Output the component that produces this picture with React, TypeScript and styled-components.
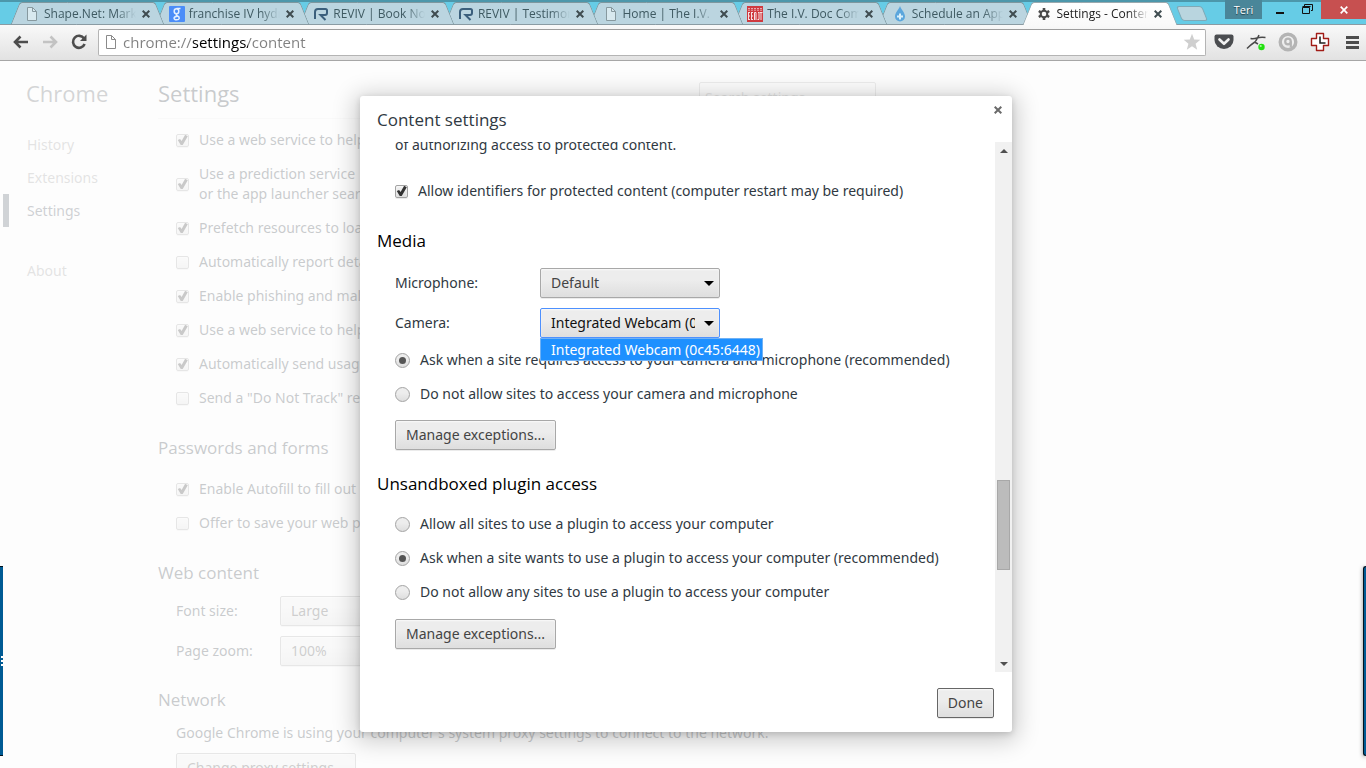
import React from 'react';
import styled, { createGlobalStyle, css } from 'styled-components';

const GlobalStyle = createGlobalStyle`
  *, *::before, *::after { box-sizing: border-box; }
  html, body { margin: 0; height: 100%; }
  body {
    font-family: 'Noto Sans', 'Open Sans', sans-serif;
    font-size: 14px;
    line-height: 20px;
    color: #303942;
    background: #fff;
    overflow: hidden;
  }
  #root { height: 100%; }
  button, input, select { font: inherit; color: inherit; margin: 0; }
  h1, h2, p, ul { margin: 0; padding: 0; font-weight: 400; }
`;

const Window = styled.div`
  display: flex;
  flex-direction: column;
  height: 100vh;
  overflow: hidden;
  position: relative;
`;

/* ---------- Tab strip ---------- */

const TitleBar = styled.header`
  display: flex;
  align-items: stretch;
  height: 25px;
  padding-left: 10px;
  font-family: 'Open Sans', sans-serif;
  background: #66cce6;
  box-shadow: inset 0 2px 0 #4c97ab, inset 0 -1px 0 #8a9ba3;
`;

const TabList = styled.nav`
  display: flex;
  flex: 1;
  min-width: 0;
  padding-top: 2px;
`;

const Tab = styled.div<{ $active?: boolean; $order: number }>`
  position: relative;
  z-index: ${(p) => (p.$active ? 20 : p.$order)};
  display: flex;
  align-items: center;
  gap: 4px;
  flex: 1 1 0;
  min-width: 0;
  padding: 0 14px;
  font-size: 12px;
  line-height: 16px;
  color: ${(p) => (p.$active ? '#222' : '#3f5a62')};

  & + & { margin-left: -11px; }

  &::before, &::after {
    content: '';
    position: absolute;
    z-index: -1;
    top: 0;
    bottom: 0;
    border: 1px solid ${(p) => (p.$active ? '#9aa9ae' : '#7d979f')};
    border-bottom: ${(p) => (p.$active ? 'none' : '1px solid #8a9ba3')};
    background: ${(p) => (p.$active ? 'linear-gradient(#fff, #f9f9f9)' : '#bbd5e0')};
  }
  &::before {
    left: 5px;
    right: 50%;
    border-right: none;
    border-top-left-radius: 3px;
    transform: skewX(-22deg);
  }
  &::after {
    left: 40%;
    right: 5px;
    border-left: none;
    border-top-right-radius: 3px;
    transform: skewX(22deg);
  }
`;

const TabTitle = styled.a`
  flex: 1;
  min-width: 0;
  overflow: hidden;
  white-space: nowrap;
  color: inherit;
  text-decoration: none;
  mask-image: linear-gradient(to right, #000 calc(100% - 20px), transparent);
`;

const IconButton = styled.button<{ $size: number }>`
  display: flex;
  align-items: center;
  justify-content: center;
  flex: none;
  width: ${(p) => p.$size}px;
  height: ${(p) => p.$size}px;
  padding: 0;
  border: none;
  background: none;
`;

const NewTab = styled.button`
  flex: none;
  width: 26px;
  height: 15px;
  margin: 6px 20px 0 1px;
  padding: 0;
  border: 1px solid #7fa9b6;
  border-radius: 3px;
  background: #b9d5df;
  transform: skewX(22deg);
`;

const UserBadge = styled.button`
  flex: none;
  width: 37px;
  height: 19px;
  padding: 0;
  border: none;
  background: #4a8699;
  color: #fff;
  font-size: 11px;
  line-height: 18px;
  text-shadow: 0 1px 1px rgba(0, 0, 0, 0.6);
`;

const WindowButton = styled.button<{ $close?: boolean }>`
  display: flex;
  align-items: center;
  justify-content: center;
  flex: none;
  width: ${(p) => (p.$close ? 45 : 26)}px;
  height: 19px;
  padding: 0;
  border: none;
  background: ${(p) => (p.$close ? '#c75050' : 'none')};
`;

const WindowButtons = styled.div`
  display: flex;
  padding-left: 5px;
  gap: 1px;
`;

/* ---------- Toolbar ---------- */

const Toolbar = styled.div`
  display: flex;
  align-items: center;
  height: 36px;
  padding: 0 4px 1px 11px;
  background: linear-gradient(#f9f9f9, #e2e2e2);
  border-bottom: 1px solid #a6a6a6;
`;

const NavButtons = styled.div`
  display: flex;
  gap: 9px;
  padding-right: 9px;
`;

const Omnibox = styled.div`
  display: flex;
  align-items: center;
  flex: 1;
  min-width: 0;
  height: 27px;
  padding: 0 4px 0 4px;
  gap: 4px;
  border: 1px solid #b4b4b4;
  border-top-color: #9d9d9d;
  border-radius: 2px;
  background: #fff;
`;

const UrlInput = styled.input`
  flex: 1;
  min-width: 0;
  padding: 0;
  border: none;
  outline: none;
  font-family: 'Open Sans', sans-serif;
  font-size: 15px;
  line-height: 20px;
  color: transparent;
  background: linear-gradient(to right, #808080 70px, #000 70px, #000 125px, #808080 125px);
  background-clip: text;
`;

const Extensions = styled.div`
  display: flex;
  gap: 12px;
  padding-left: 8px;
`;

/* ---------- Form controls ---------- */

const CheckInput = styled.input.attrs({ type: 'checkbox' })`
  appearance: none;
  flex: none;
  position: relative;
  width: 13px;
  height: 13px;
  border: 1px solid #a3a3a3;
  border-radius: 2px;
  background: linear-gradient(#ededed, #ededed 38%, #dedede);
  box-shadow: 0 1px 0 rgba(0, 0, 0, 0.08), inset 0 1px 2px rgba(255, 255, 255, 0.75);

  &:checked::after {
    content: '';
    position: absolute;
    inset: 0;
    background: #333;
    clip-path: polygon(7% 50%, 28% 42%, 42% 58%, 74% 3%, 98% 16%, 52% 96%, 34% 96%);
  }
`;

const RadioInput = styled.input.attrs({ type: 'radio' })`
  appearance: none;
  flex: none;
  display: grid;
  place-items: center;
  width: 15px;
  height: 15px;
  border: 1px solid #a3a3a3;
  border-radius: 50%;
  background: linear-gradient(#ededed, #ededed 38%, #dedede);

  &:checked::after {
    content: '';
    width: 7px;
    height: 7px;
    border-radius: 50%;
    background: #555;
  }
`;

const OptionLabel = styled.label<{ $gap: number }>`
  display: flex;
  align-items: center;
  gap: ${(p) => p.$gap}px;
  white-space: nowrap;
`;

const raised = css`
  border: 1px solid #a8a8a8;
  border-radius: 2px;
  background: linear-gradient(#ededed, #ededed 38%, #dedede);
  box-shadow: 0 1px 0 rgba(0, 0, 0, 0.08), inset 0 1px 2px rgba(255, 255, 255, 0.75);
`;

const Button = styled.button<{ $focused?: boolean }>`
  ${raised}
  align-self: flex-start;
  flex: none;
  height: 30px;
  padding: 0 10px;
  white-space: nowrap;
  color: #444;
  ${(p) => p.$focused && css`border-color: #666;`}
`;

const SelectBox = styled.div<{ $width: number }>`
  position: relative;
  flex: none;
  width: ${(p) => p.$width}px;

  &::after {
    content: '';
    position: absolute;
    top: 13px;
    right: 6px;
    border: 5px solid transparent;
    border-top-color: #000;
    border-bottom: none;
    pointer-events: none;
  }
`;

const Select = styled.select<{ $open?: boolean }>`
  ${raised}
  appearance: none;
  display: block;
  width: 100%;
  height: 30px;
  padding: 0 24px 0 10px;
  color: #444;
  outline: none;
  ${(p) => p.$open && css`border-color: #4d90fe; color: #111;`}
`;

const Popup = styled.ul`
  position: absolute;
  z-index: 2;
  top: 30px;
  left: 0;
  list-style: none;
  white-space: nowrap;
  border: 1px solid #6fb1f5;
  background: #1e90ff;
  color: #fff;
`;

const PopupItem = styled.li`
  padding: 1px 2px 0 10px;
`;

/* ---------- Settings page behind the dialog ---------- */

const Viewport = styled.div`
  position: relative;
  flex: 1;
  min-height: 0;
  overflow: hidden;
`;

const Page = styled.div`
  display: flex;
  height: 100%;
  padding-left: 3px;
  overflow: hidden;
`;

const Sidebar = styled.nav`
  flex: none;
  width: 155px;
  padding-top: 17px;
`;

const PageTitle = styled.h1<{ $dim?: boolean }>`
  font-family: 'Open Sans', sans-serif;
  font-size: 22px;
  line-height: 30px;
  color: ${(p) => (p.$dim ? '#5c6166' : '#303942')};
`;

const SidebarTitle = styled(PageTitle)`
  padding: 0 0 20px 23px;
`;

const SideLink = styled.a<{ $current?: boolean; $apart?: boolean }>`
  display: block;
  height: 33px;
  margin-top: ${(p) => (p.$apart ? 27 : 0)}px;
  padding-left: ${(p) => (p.$current ? 18 : 24)}px;
  border-left: ${(p) => (p.$current ? '6px solid #4e5764' : 'none')};
  line-height: 33px;
  text-decoration: none;
  color: ${(p) => (p.$current ? '#464e5a' : '#999')};
`;

const Main = styled.main`
  flex: 0 1 718px;
  min-width: 0;
`;

const MainHeader = styled.div`
  display: flex;
  justify-content: space-between;
  height: 58px;
  padding-top: 17px;
  border-bottom: 1px solid #eee;
`;

const SearchInput = styled.input`
  width: 177px;
  height: 30px;
  margin-top: 4px;
  padding: 0 5px;
  border: 1px solid #bfbfbf;
  border-radius: 2px;
  &::placeholder { color: #a9a9a9; opacity: 1; }
`;

const OptionList = styled.div<{ $top: number }>`
  display: flex;
  flex-direction: column;
  gap: 14px;
  padding: ${(p) => p.$top}px 0 0 18px;
`;

const FieldList = styled(OptionList)`
  gap: 10px;
`;

const SectionTitle = styled.h2<{ $top: number; $strong?: boolean }>`
  margin-top: ${(p) => p.$top}px;
  font-family: 'Open Sans', sans-serif;
  font-size: 17px;
  line-height: 24px;
  color: ${(p) => (p.$strong ? '#000' : '#303942')};
`;

const Field = styled.div`
  display: flex;
  align-items: center;
`;

const FieldLabel = styled.label<{ $width: number }>`
  flex: none;
  width: ${(p) => p.$width}px;
`;

const Shade = styled.div`
  position: absolute;
  inset: 0;
  display: grid;
  place-items: center;
  padding: 0 0 1px 6px;
  background: rgba(252, 252, 252, 0.75);
`;

/* ---------- Dialog ---------- */

const Dialog = styled.section`
  position: relative;
  display: flex;
  flex-direction: column;
  width: 652px;
  max-width: 96%;
  border-radius: 3px;
  background: #fff;
  box-shadow: 0 4px 23px 5px rgba(0, 0, 0, 0.2), 0 2px 6px rgba(0, 0, 0, 0.15);
`;

const DialogHeader = styled.div`
  display: flex;
  justify-content: space-between;
  align-items: flex-start;
  height: 46px;
  padding: 12px 6px 0 17px;
`;

const DialogTitle = styled.h1`
  font-family: 'Open Sans', sans-serif;
  font-size: 17px;
  line-height: 24px;
`;

const DialogClose = styled(IconButton)`
  margin-top: -6px;
`;

const DialogBody = styled.div`
  display: flex;
  overflow: hidden;
`;

const Content = styled.div`
  flex: 1;
  min-width: 0;
  padding: 0 0 23px 17px;
  overflow: hidden;
`;

const Intro = styled.p`
  margin: -7px 0 0 18px;
`;

const Scrollbar = styled.div`
  display: flex;
  flex-direction: column;
  flex: none;
  align-items: center;
  width: 17px;
  padding: 7px 0 6px;
  background: #f1f1f1;
`;

const ScrollArrow = styled.i<{ $down?: boolean }>`
  border: 4px solid transparent;
  ${(p) => (p.$down ? css`border-top-color: #505050; border-bottom: none;` : css`border-bottom-color: #505050; border-top: none;`)}
`;

const ScrollTrack = styled.div`
  flex: 1;
  display: grid;
  grid-template-rows: 327fr 90fr 92fr;
  width: 13px;
`;

const ScrollThumb = styled.div`
  grid-row: 2;
  border: 1px solid #a8a8a8;
  background: #bcbcbc;
`;

const DialogFooter = styled.div`
  display: flex;
  justify-content: flex-end;
  padding: 16px 18px 14px;
`;

/* ---------- Window edges of the neighbouring panel ---------- */

const EdgeStrip = styled.div<{ $side: 'left' | 'right' }>`
  position: absolute;
  z-index: 5;
  ${(p) => p.$side}: 0;
  bottom: 12px;
  width: 3px;
  height: 190px;
  border-top: 1px solid #00121f;
  border-bottom: 1px solid #00121f;
  background: #005b94;
  ${(p) => p.$side === 'right' && css`
    border-left: 1px solid #00121f;
    border-radius: 3px 0 0 3px;
    box-shadow: 0 1px 4px rgba(0, 0, 0, 0.5);
  `}
`;

const GripDots = styled.div`
  display: flex;
  flex-direction: column;
  gap: 2px;
  align-items: flex-end;
  padding-top: 89px;
  & > i { width: 2px; height: 2px; background: #fff; }
`;

/* ---------- Icons ---------- */

const Cross = ({ size = 8, color = '#3f4c50', stroke = 2 }: { size?: number; color?: string; stroke?: number }) => (
  <svg width={size} height={size} viewBox="0 0 8 8" stroke={color} strokeWidth={stroke}>
    <path d="M.7.7l6.6 6.6M7.3.7L.7 7.3" />
  </svg>
);

const PageIcon = ({ faded }: { faded?: boolean }) => (
  <svg width="16" height="16" viewBox="0 0 16 16" fill={faded ? '#d8e9ef' : '#fff'} stroke={faded ? '#87999f' : '#8a8a8a'}>
    <path d="M3.5 1.5h5l4 4v9h-9z" />
    <path d="M8.5 1.5v4h4" fill="none" />
  </svg>
);

const GoogleIcon = () => (
  <svg width="16" height="16" viewBox="0 0 16 16">
    <rect width="16" height="16" rx="1" fill="#4b8df8" />
    <g fill="none" stroke="#e4f0ff" strokeWidth="1.5">
      <ellipse cx="7.5" cy="5.2" rx="2.3" ry="2.5" />
      <path d="M7.5 2.5h4M8.2 7.6c-1.6 1-1 1.8.4 2.4 2.4 1 2.3 3.800-.9 3.800-3.600 0-3.600-3.300.6-3.600" />
    </g>
  </svg>
);

const RevivIcon = () => (
  <svg width="16" height="16" viewBox="0 0 16 16" fill="none" stroke="#3b5f7c" strokeWidth="2">
    <path d="M2 13V6Q2 3 5 3H12.500Q14 3 14 4.500V7Q14 9 12 9H7.500L12.500 14" />
  </svg>
);

const BeastIcon = () => (
  <svg width="16" height="16" viewBox="0 0 16 16">
    <rect width="16" height="16" fill="#cf3a3f" />
    <path d="M1 2.500h14M1 4.200h14" stroke="#e9a9ae" strokeDasharray="2 1" />
    <path d="M1.500 6v8M1.500 6.500h1.500M1.500 10h1.500M1.500 13.500h1.500M4.500 6v8M4.500 6.500h1.500M4.500 10h1.500M4.500 13.500h1.500M7.500 14V6.500h1.500V14M11 6.500h1v7h-1.500M12.500 6.500h3M14 6v8" stroke="#f6e3e5" fill="none" />
  </svg>
);

const DropIcon = () => (
  <svg width="16" height="16" viewBox="0 0 16 16">
    <path d="M8 0C9 3.500 13 6.500 13 10.500A5 5 0 0 1 3 10.500C3 6.500 7 3.500 8 0z" fill="#5ba6dc" />
    <path d="M8 7.500v6M5 10.500h6" stroke="#d9f0fb" strokeWidth="2" />
  </svg>
);

const GearIcon = () => (
  <svg width="16" height="16" viewBox="0 0 16 16" fill="none" stroke="#4a4a4a">
    <circle cx="8" cy="8" r="3.300" strokeWidth="2" />
    <path d="M8 2v2.500M8 11.500V14M2.800 5l2.200 1.300M11 9.700l2.200 1.300M2.800 11L5 9.700M11 6.300L13.200 5" strokeWidth="2.600" />
  </svg>
);

const BackIcon = ({ color }: { color: string }) => (
  <svg width="18" height="18" viewBox="0 0 18 18" fill="none" stroke={color} strokeWidth="2.600">
    <path d="M8.500 3.500L3 9l5.500 5.500M3 9H16" />
  </svg>
);

const ForwardIcon = ({ color }: { color: string }) => (
  <svg width="18" height="18" viewBox="0 0 18 18" fill="none" stroke={color} strokeWidth="2.600">
    <path d="M9.500 3.500L15 9l-5.500 5.500M15 9H2" />
  </svg>
);

const ReloadIcon = () => (
  <svg width="18" height="18" viewBox="0 0 18 18">
    <path d="M14 5.500A6 6 0 1 0 14.600 11" fill="none" stroke="#4d4d4d" strokeWidth="2.600" />
    <path d="M16.500 1.500v6.500H10z" fill="#4d4d4d" />
  </svg>
);

const StarIcon = () => (
  <svg width="18" height="18" viewBox="0 0 18 18">
    <path d="M9 .8l2.200 5.700 6.100.3-4.700 3.900 1.600 6L9 13.300l-5.200 3.400 1.600-6L.7 6.800l6.100-.3z" fill="#cfcfcf" />
  </svg>
);

const PocketIcon = () => (
  <svg width="20" height="20" viewBox="0 0 20 20">
    <path d="M2.500 2.500h15Q19.500 2.500 19.500 4.500V8a9.500 9 0 0 1-19 0V4.500Q.5 2.500 2.500 2.500z" fill="#4b4d50" />
    <path d="M5.500 7.500L10 11.800l4.500-4.300" fill="none" stroke="#f2f2f2" strokeWidth="2.600" strokeLinecap="round" strokeLinejoin="round" />
  </svg>
);

const RunnerIcon = () => (
  <svg width="20" height="20" viewBox="0 0 20 20" fill="none" stroke="#4a4a4a">
    <path d="M4.500 6.500Q8 7 11 6T19.500 5.500M13 3l-1.500 3Q10 9.500 7.500 11T1 16.500M8.500 10l3.500 2" strokeWidth="1.500" />
    <circle cx="15.500" cy="15" r="3.200" fill="#22e010" stroke="none" />
    <circle cx="14.700" cy="14" r="1.100" fill="#a6ff9b" stroke="none" />
  </svg>
);

const RingIcon = () => (
  <svg width="20" height="20" viewBox="0 0 20 20" fill="none" stroke="#b4b4b4">
    <circle cx="10" cy="10" r="7.800" strokeWidth="3.400" />
    <circle cx="10" cy="9.500" r="2.800" strokeWidth="2.200" />
    <path d="M12.800 9.500v6" strokeWidth="2.200" />
  </svg>
);

const CrossClockIcon = () => (
  <svg width="20" height="20" viewBox="0 0 20 20">
    <path d="M6.500 1.500h7v5h5v7h-5v5h-7v-5h-5v-7h5z" fill="#fff" stroke="#a11c17" strokeWidth="1.400" strokeLinejoin="round" />
    <path d="M10 4.500V11h5.500" fill="none" stroke="#222" strokeWidth="1.600" />
  </svg>
);

const MenuIcon = () => (
  <svg width="20" height="20" viewBox="0 0 20 20" stroke="#4d4d4d" strokeWidth="3">
    <path d="M4 5.500h13M4 10.500h13M4 15.500h13" />
  </svg>
);

const tabs = [
  { title: 'Shape.Net: Marke', icon: <PageIcon faded /> },
  { title: 'franchise IV hydra', icon: <GoogleIcon /> },
  { title: 'REVIV | Book Now', icon: <RevivIcon /> },
  { title: 'REVIV | Testimoni', icon: <RevivIcon /> },
  { title: 'Home | The I.V. Do', icon: <PageIcon faded /> },
  { title: 'The I.V. Doc Come', icon: <BeastIcon /> },
  { title: 'Schedule an Appo', icon: <DropIcon /> },
  { title: 'Settings - Content', icon: <GearIcon />, active: true },
];

const privacyOptions: { text: React.ReactNode; on: boolean }[] = [
  { text: 'Use a web service to help', on: true },
  { text: <>Use a prediction service<br />or the app launcher search</>, on: true },
  { text: 'Prefetch resources to load', on: true },
  { text: 'Automatically report details', on: false },
  { text: 'Enable phishing and malware', on: true },
  { text: 'Use a web service to help', on: true },
  { text: 'Automatically send usage', on: true },
  { text: 'Send a "Do Not Track" request', on: false },
];

const Check = ({ on, children }: { on: boolean; children: React.ReactNode }) => (
  <OptionLabel $gap={10}>
    <CheckInput defaultChecked={on} />
    <span>{children}</span>
  </OptionLabel>
);

const Radio = ({ name, on, children }: { name: string; on?: boolean; children: React.ReactNode }) => (
  <OptionLabel $gap={10}>
    <RadioInput name={name} defaultChecked={on} />
    <span>{children}</span>
  </OptionLabel>
);

export default function App() {
  return (
    <Window>
      <GlobalStyle />
      <TitleBar>
        <TabList>
          {tabs.map((t, i) => (
            <Tab key={t.title} $active={t.active} $order={tabs.length - i}>
              {t.icon}
              <TabTitle href="#">{t.title}</TabTitle>
              <IconButton $size={12} aria-label="Close tab"><Cross /></IconButton>
            </Tab>
          ))}
        </TabList>
        <NewTab aria-label="New tab" />
        <UserBadge>Teri</UserBadge>
        <WindowButtons>
          <WindowButton aria-label="Minimize">
            <svg width="10" height="10"><path d="M1 8h8" stroke="#111" strokeWidth="2" /></svg>
          </WindowButton>
          <WindowButton aria-label="Restore">
            <svg width="11" height="11" fill="none" stroke="#111"><path d="M2.500 2V.5h8v6H9M.5 3.500h7v6h-7zM.5 2.500h8" /></svg>
          </WindowButton>
          <WindowButton $close aria-label="Close window"><Cross color="#fff" stroke={1.7} /></WindowButton>
        </WindowButtons>
      </TitleBar>

      <Toolbar>
        <NavButtons>
          <IconButton $size={20} aria-label="Back"><BackIcon color="#4d4d4d" /></IconButton>
          <IconButton $size={20} aria-label="Forward"><ForwardIcon color="#c3c3c3" /></IconButton>
          <IconButton $size={20} aria-label="Reload"><ReloadIcon /></IconButton>
        </NavButtons>
        <Omnibox>
          <PageIcon />
          <UrlInput aria-label="Address" defaultValue="chrome://settings/content" />
          <IconButton $size={18} aria-label="Bookmark"><StarIcon /></IconButton>
        </Omnibox>
        <Extensions>
          <IconButton $size={20} aria-label="Pocket"><PocketIcon /></IconButton>
          <IconButton $size={20} aria-label="Runner"><RunnerIcon /></IconButton>
          <IconButton $size={20} aria-label="Ring"><RingIcon /></IconButton>
          <IconButton $size={20} aria-label="Clock"><CrossClockIcon /></IconButton>
          <IconButton $size={20} aria-label="Menu"><MenuIcon /></IconButton>
        </Extensions>
      </Toolbar>

      <Viewport>
        <Page>
          <Sidebar>
            <SidebarTitle $dim>Chrome</SidebarTitle>
            <SideLink href="#">History</SideLink>
            <SideLink href="#">Extensions</SideLink>
            <SideLink href="#" $current>Settings</SideLink>
            <SideLink href="#" $apart>About</SideLink>
          </Sidebar>
          <Main>
            <MainHeader>
              <PageTitle>Settings</PageTitle>
              <SearchInput type="search" aria-label="Search settings" placeholder="Search settings" />
            </MainHeader>
            <OptionList $top={11}>
              {privacyOptions.map((o, i) => <Check key={i} on={o.on}>{o.text}</Check>)}
            </OptionList>
            <SectionTitle $top={28}>Passwords and forms</SectionTitle>
            <OptionList $top={19}>
              <Check on>Enable Autofill to fill out</Check>
              <Check on={false}>Offer to save your web passwords</Check>
            </OptionList>
            <SectionTitle $top={28}>Web content</SectionTitle>
            <FieldList $top={11}>
              <Field>
                <FieldLabel $width={104} htmlFor="font-size">Font size:</FieldLabel>
                <SelectBox $width={140}><Select id="font-size"><option>Large</option></Select></SelectBox>
              </Field>
              <Field>
                <FieldLabel $width={104} htmlFor="zoom">Page zoom:</FieldLabel>
                <SelectBox $width={140}><Select id="zoom"><option>100%</option></Select></SelectBox>
              </Field>
            </FieldList>
            <SectionTitle $top={22}>Network</SectionTitle>
            <FieldList $top={11}>
              <p>Google Chrome is using your computer's system proxy settings to connect to the network.</p>
              <Button>Change proxy settings...</Button>
            </FieldList>
          </Main>
        </Page>

        <Shade>
          <Dialog role="dialog" aria-labelledby="dialog-title">
            <DialogHeader>
              <DialogTitle id="dialog-title">Content settings</DialogTitle>
              <DialogClose $size={16} aria-label="Close"><Cross color="#6a6a6a" /></DialogClose>
            </DialogHeader>
            <DialogBody>
              <Content>
                <Intro>of authorizing access to protected content.</Intro>
                <OptionList $top={26}>
                  <Check on>Allow identifiers for protected content (computer restart may be required)</Check>
                </OptionList>
                <SectionTitle $top={28} $strong>Media</SectionTitle>
                <FieldList $top={15}>
                  <Field>
                    <FieldLabel $width={145} htmlFor="microphone">Microphone:</FieldLabel>
                    <SelectBox $width={180}><Select id="microphone"><option>Default</option></Select></SelectBox>
                  </Field>
                  <Field>
                    <FieldLabel $width={145} htmlFor="camera">Camera:</FieldLabel>
                    <SelectBox $width={180}>
                      <Select id="camera" $open><option>Integrated Webcam (0c45:6448)</option></Select>
                      <Popup role="listbox" aria-label="Camera">
                        <PopupItem role="option" aria-selected>Integrated Webcam (0c45:6448)</PopupItem>
                      </Popup>
                    </SelectBox>
                  </Field>
                </FieldList>
                <OptionList $top={12}>
                  <Radio name="media" on>Ask when a site requires access to your camera and microphone (recommended)</Radio>
                  <Radio name="media">Do not allow sites to access your camera and microphone</Radio>
                </OptionList>
                <OptionList $top={16}><Button>Manage exceptions...</Button></OptionList>
                <SectionTitle $top={22} $strong>Unsandboxed plugin access</SectionTitle>
                <OptionList $top={18}>
                  <Radio name="plugin">Allow all sites to use a plugin to access your computer</Radio>
                  <Radio name="plugin" on>Ask when a site wants to use a plugin to access your computer (recommended)</Radio>
                  <Radio name="plugin">Do not allow any sites to use a plugin to access your computer</Radio>
                </OptionList>
                <OptionList $top={17}><Button>Manage exceptions...</Button></OptionList>
              </Content>
              <Scrollbar>
                <ScrollArrow />
                <ScrollTrack><ScrollThumb /></ScrollTrack>
                <ScrollArrow $down />
              </Scrollbar>
            </DialogBody>
            <DialogFooter>
              <Button $focused>Done</Button>
            </DialogFooter>
          </Dialog>
        </Shade>
        <EdgeStrip $side="left"><GripDots><i /><i /><i /></GripDots></EdgeStrip>
        <EdgeStrip $side="right" />
      </Viewport>
    </Window>
  );
}
